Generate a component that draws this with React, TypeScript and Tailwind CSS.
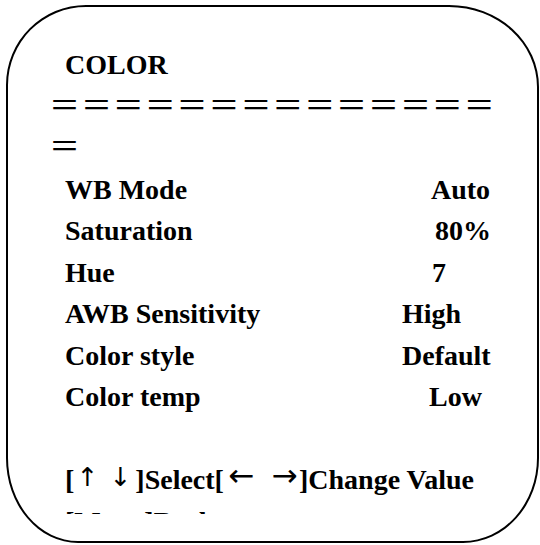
import React from "react";

const rows: { label: string; value: string; pad: string }[] = [
  { label: "WB Mode", value: "Auto", pad: "pl-[29px]" },
  { label: "Saturation", value: "80%", pad: "pl-[33px]" },
  { label: "Hue", value: "7", pad: "pl-[30px]" },
  { label: "AWB Sensitivity", value: "High", pad: "pl-[0px]" },
  { label: "Color style", value: "Default", pad: "pl-[0px]" },
  { label: "Color temp", value: "Low", pad: "pl-[27px]" },
];

export default function App() {
  return (
    <div className="w-[540px] h-[545px] bg-white pt-[5px] pl-[6px] pr-[1px] pb-[2px] flex">
      <div className="flex-1 border-2 border-black rounded-[80px_90px_76px_72px/80px_82px_85px_85px] pt-[37px] pl-[57px] text-black font-bold text-[28px] leading-[41.5px] font-['Liberation_Serif','Times_New_Roman',serif]">
        <div>COLOR</div>
        <div className="-ml-[16px] -mt-[4px] mb-[4px] font-normal text-[31px] tracking-[0.9px] font-['Noto_Sans_CJK_SC',sans-serif] leading-[41.5px]">
          <div>＝＝＝＝＝＝＝＝＝＝＝＝＝＝</div>
          <div>＝</div>
        </div>
        {rows.map((r) => (
          <div key={r.label} className="flex">
            <span className="w-[337px] shrink-0">{r.label}</span>
            <span className={r.pad}>{r.value}</span>
          </div>
        ))}
        <div className="h-[41.5px]" />
        <div className="h-[41.5px] whitespace-nowrap">
          <span>[</span>
          <span className="inline-block w-[26px] text-center align-[3px] leading-none text-[26px] font-normal font-['DejaVu_Sans',sans-serif]">↑</span>
          <span className="inline-block w-[35px] pl-[5px] text-center align-[3px] leading-none text-[26px] font-normal font-['DejaVu_Sans',sans-serif]">↓</span>
          <span>]Select[</span>
          <span className="inline-block w-[35px] text-center align-[3px] leading-none text-[31px] font-normal font-['DejaVu_Sans',sans-serif]">←</span>
          <span className="inline-block w-[40px] pl-[11px] text-center align-[3px] leading-none text-[31px] font-normal font-['DejaVu_Sans',sans-serif]">→</span>
          <span>]Change Value</span>
        </div>
        <div className="h-[13px] overflow-hidden">
          <div>[Menu]Back</div>
        </div>
      </div>
    </div>
  );
}
